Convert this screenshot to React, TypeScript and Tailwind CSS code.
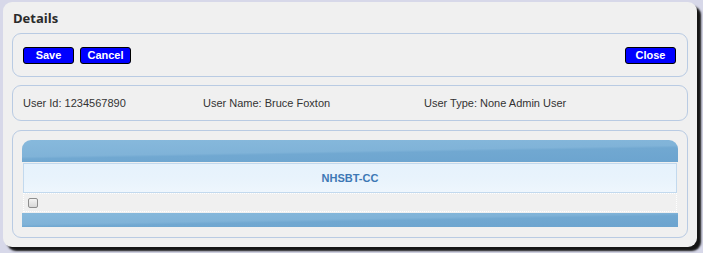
import { useState } from 'react'

// ============ Details dialog ============

function BlueButton({ label }: { label: string }) {
  return (
    <button
      type="button"
      className="h-[17px] w-[51px] rounded-[3px] border border-black bg-[#0000ff] text-[11px] font-bold leading-none text-white"
      style={{ fontFamily: '"Liberation Sans", Arial, sans-serif' }}
    >
      {label}
    </button>
  )
}

function Fieldset({ className, children }: { className: string; children: React.ReactNode }) {
  return <div className={`rounded-[9px] border border-[#b9cbe3] ${className}`}>{children}</div>
}

export default function App() {
  const [checked, setChecked] = useState(false)

  return (
    <div
      className="h-[253px] w-[703px] bg-[#d7d8e9] pl-[3px] pt-[2px]"
      style={{ fontFamily: '"Liberation Sans", Arial, sans-serif' }}
    >
      <div className="flex h-[245px] w-[694px] flex-col rounded-[9px] bg-[#f0f0f0] px-[9px] shadow-[4px_4px_2px_#151515]">
        <h2
          className="mt-[7px] h-[24px] pl-[1px] text-[13px] font-bold text-[#2b2b2b]"
          style={{ fontFamily: '"Open Sans", "DejaVu Sans", sans-serif' }}
        >
          Details
        </h2>

        <Fieldset className="flex h-[44px] items-center justify-between pl-[10px] pr-[11px]">
          <div className="flex gap-[6px]">
            <BlueButton label="Save" />
            <BlueButton label="Cancel" />
          </div>
          <BlueButton label="Close" />
        </Fieldset>

        <Fieldset className="mt-[8px] flex h-[36px] items-center pl-[10px] text-[11px] text-[#333]">
          <span className="w-[180px]">User Id: 1234567890</span>
          <span className="w-[221px]">User Name: Bruce Foxton</span>
          <span>User Type: None Admin User</span>
        </Fieldset>

        <Fieldset className="mt-[9px] h-[108px] px-[9px] pt-[9px]">
          <div className="h-[22px] rounded-t-[9px] bg-[linear-gradient(179deg,#87b9dc_0%,#80b3d8_50%,#71a8d1_57%,#6ca4cf_100%)]" />
          <div className="mx-[1px] mt-[1px] flex h-[30px] items-center justify-center border border-[#c2d9ee] bg-[linear-gradient(#e6f2fc,#e8f3fc_50%,#eef6fd)] text-[11px] font-bold text-[#3d78b5]">
            NHSBT-CC
          </div>
          <div className="mx-[1px] flex h-[19px] items-center border border-dotted border-white pl-[4px]">
            <input
              type="checkbox"
              checked={checked}
              onChange={e => setChecked(e.target.checked)}
              className="m-0 h-[10px] w-[10px] appearance-none rounded-[2px] border border-[#8e8e8e] bg-[linear-gradient(#f4f4f4,#d8d8d8)]"
            />
          </div>
          <div className="mt-[1px] h-[14px] bg-[linear-gradient(179deg,#87b9dc_0%,#80b3d8_45%,#71a8d1_55%,#6ca4cf_100%)]" />
        </Fieldset>
      </div>
    </div>
  )
}
